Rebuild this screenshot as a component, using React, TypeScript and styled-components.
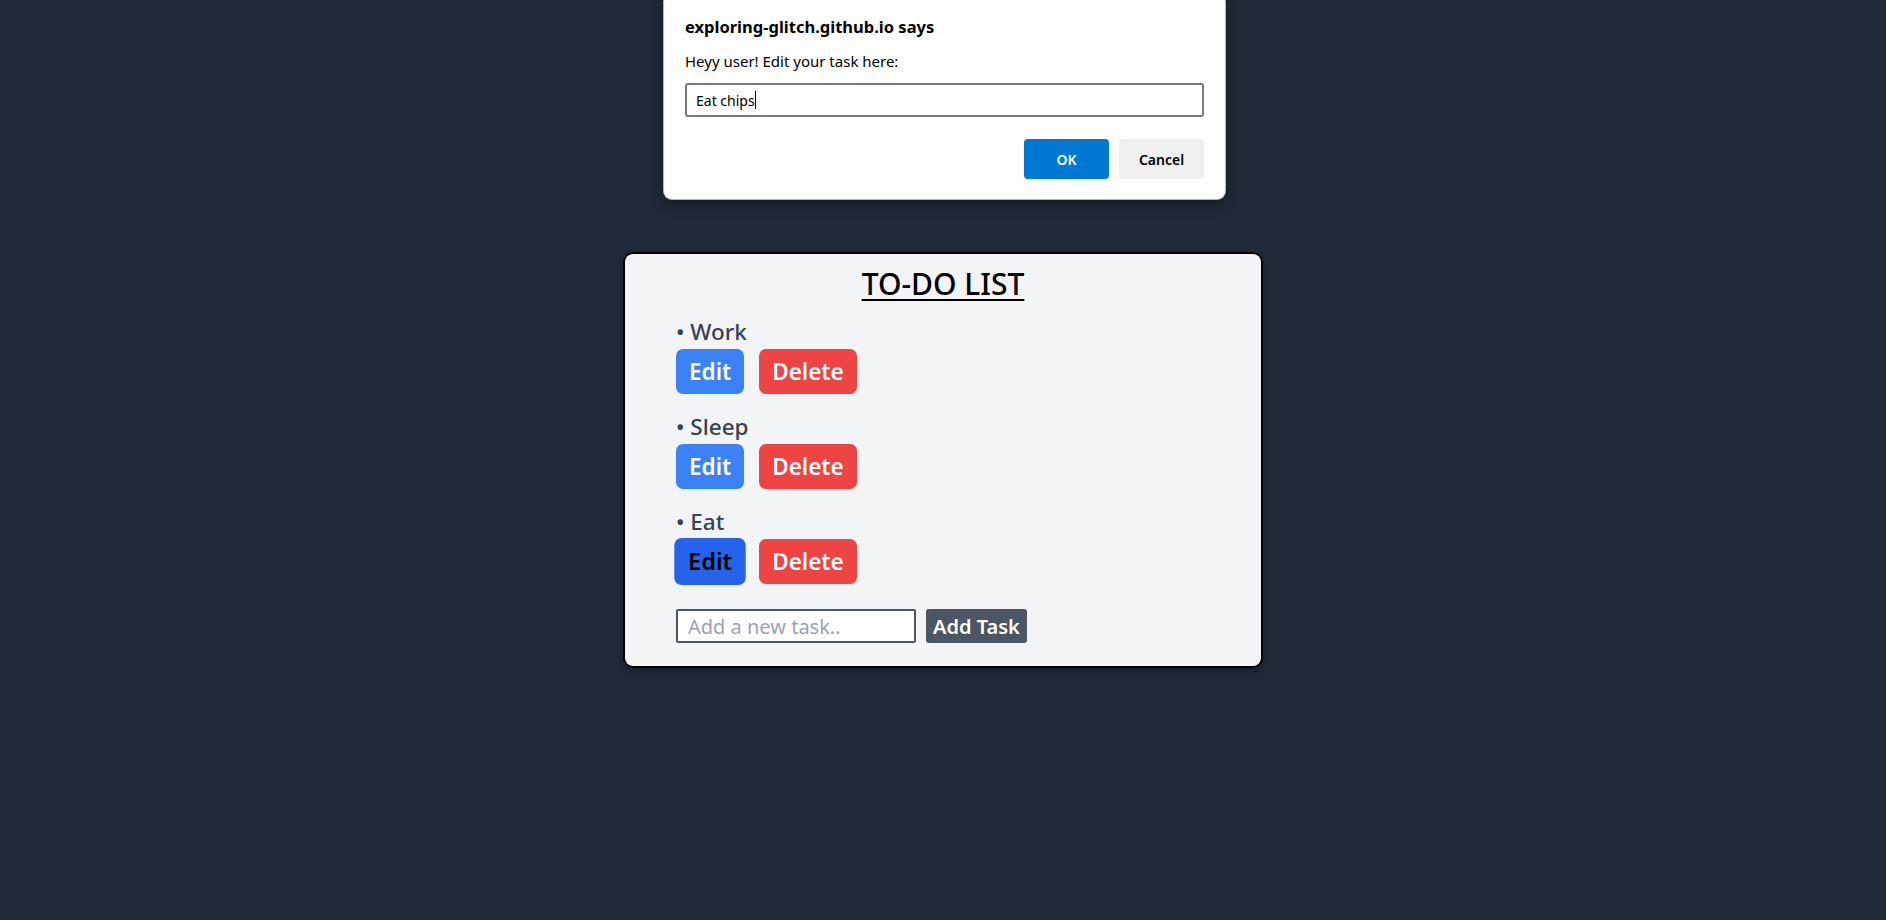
import { useState } from "react";
import styled, { createGlobalStyle } from "styled-components";

const GlobalStyle = createGlobalStyle`
  * {
    box-sizing: border-box;
  }
  body {
    margin: 0;
    background-color: #1f2937;
    font-family: "Noto Sans", "Open Sans", sans-serif;
  }
`;

const Page = styled.div`
  min-height: 100vh;
  display: flex;
  align-items: center;
  justify-content: center;
`;

const Card = styled.div`
  width: 640px;
  background-color: #f3f4f6;
  border: 2px solid #000;
  border-radius: 10px;
  box-shadow: 0 4px 6px rgba(0, 0, 0, 0.25);
  padding: 10px 0 23px 51px;
`;

const Title = styled.h1`
  margin: 0 0 10px -51px;
  text-align: center;
  font-size: 30px;
  line-height: 40px;
  font-weight: 500;
  color: #000;
  text-decoration: underline;
  text-decoration-thickness: 2px;
  text-underline-offset: 4px;
`;

const List = styled.ul`
  list-style: none;
  margin: 0 0 25px;
  padding: 0;
  display: flex;
  flex-direction: column;
  gap: 15px;
`;

const Item = styled.li``;

const ItemText = styled.div`
  font-size: 22.5px;
  line-height: 35px;
  font-weight: 500;
  color: #374151;
`;

const Actions = styled.div`
  display: flex;
  gap: 15px;
`;

const ActionButton = styled.button<{ $tone: "edit" | "delete"; $hover?: boolean }>`
  height: 45px;
  padding: 0 13px;
  border: none;
  border-radius: 7px;
  font-family: inherit;
  font-size: 22.5px;
  font-weight: 600;
  cursor: pointer;
  color: ${(p) => (p.$hover ? "#000" : "#fff")};
  background-color: ${(p) =>
    p.$tone === "delete" ? "#ef4444" : p.$hover ? "#2563eb" : "#3b82f6"};
  transform: ${(p) => (p.$hover ? "scale(1.05)" : "none")};
`;

const AddRow = styled.div`
  display: flex;
  gap: 10px;
`;

const TaskInput = styled.input`
  width: 240px;
  height: 34px;
  padding: 0 10px;
  border: 2px solid #4b5563;
  border-radius: 2px;
  background: #fff;
  font-family: inherit;
  font-size: 20px;
  color: #111827;
  outline: none;
  &::placeholder {
    color: #9ca3af;
  }
`;

const AddButton = styled.button`
  height: 34px;
  padding: 0 7px;
  border: none;
  border-radius: 3px;
  background-color: #4b5563;
  color: #fff;
  font-family: inherit;
  font-size: 20px;
  font-weight: 600;
`;

// browser prompt() box sitting over the page
const Dialog = styled.div`
  position: absolute;
  top: -6px;
  left: 664px;
  width: 561px;
  padding: 22px 21px 20px;
  background: #fff;
  border-radius: 8px;
  box-shadow: 0 0 0 1px #b8b8b8, 0 4px 14px rgba(0, 0, 0, 0.35);
  color: #000;
`;

const DialogTitle = styled.div`
  font-size: 16.5px;
  line-height: 22px;
  font-weight: 700;
`;

const DialogMessage = styled.div`
  margin-top: 13px;
  font-size: 15px;
  line-height: 20px;
`;

const DialogField = styled.div`
  margin-top: 12px;
  height: 34px;
  display: flex;
  align-items: center;
  padding: 0 9px;
  border: 2px solid #7a7a7a;
  border-radius: 3px;
  font-size: 14px;
`;

const Caret = styled.span`
  display: inline-block;
  width: 1px;
  height: 18px;
  background: #000;
`;

const DialogActions = styled.div`
  margin-top: 22px;
  display: flex;
  justify-content: flex-end;
  gap: 10px;
`;

const DialogButton = styled.button<{ $primary?: boolean }>`
  width: 85px;
  height: 40px;
  border: none;
  border-radius: 4px;
  font-family: inherit;
  font-size: 14px;
  font-weight: 600;
  background-color: ${(p) => (p.$primary ? "#0078d4" : "#efefef")};
  color: ${(p) => (p.$primary ? "#fff" : "#000")};
`;

function App() {
  const [tasks] = useState(["Work", "Sleep", "Eat"]);

  return (
    <>
      <GlobalStyle />
      <Page>
        <Card>
          <Title>TO-DO LIST</Title>
          <List>
            {tasks.map((task, i) => (
              <Item key={task}>
                <ItemText>• {task}</ItemText>
                <Actions>
                  <ActionButton $tone="edit" $hover={i === tasks.length - 1}>
                    Edit
                  </ActionButton>
                  <ActionButton $tone="delete">Delete</ActionButton>
                </Actions>
              </Item>
            ))}
          </List>
          <AddRow>
            <TaskInput placeholder="Add a new task.." />
            <AddButton>Add Task</AddButton>
          </AddRow>
        </Card>
      </Page>
      <Dialog>
        <DialogTitle>exploring-glitch.github.io says</DialogTitle>
        <DialogMessage>Heyy user! Edit your task here:</DialogMessage>
        <DialogField>
          Eat chips
          <Caret />
        </DialogField>
        <DialogActions>
          <DialogButton $primary>OK</DialogButton>
          <DialogButton>Cancel</DialogButton>
        </DialogActions>
      </Dialog>
    </>
  );
}

export default App;
